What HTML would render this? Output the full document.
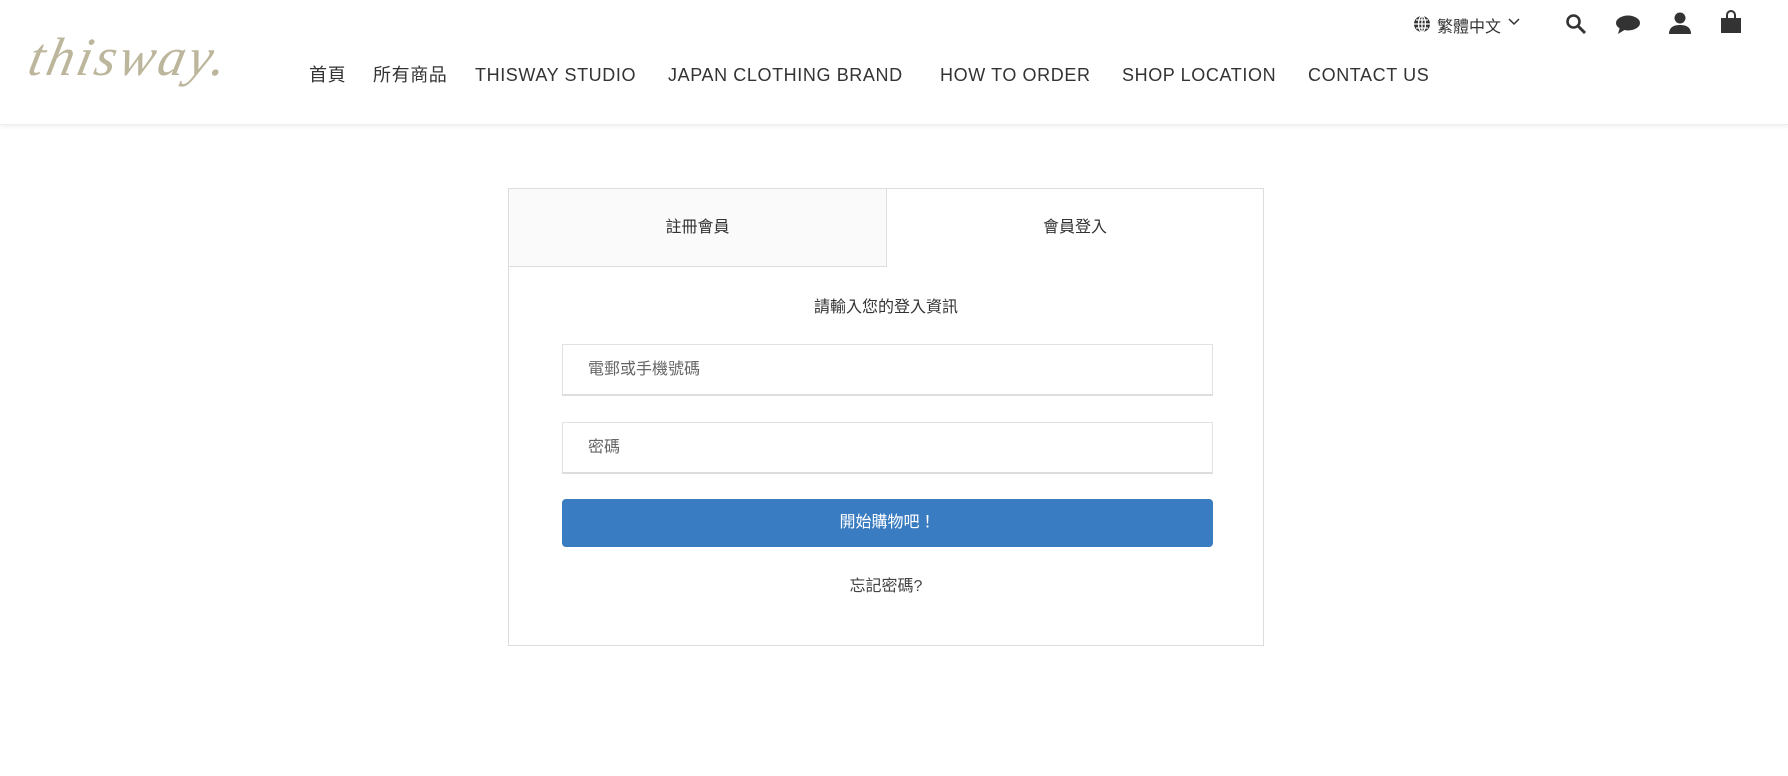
<!DOCTYPE html>
<html><head><meta charset="utf-8"><style>
*{margin:0;padding:0;box-sizing:border-box}
body{width:1788px;height:776px;background:#fff;font-family:"Liberation Sans","Noto Sans CJK TC",sans-serif;color:#333;position:relative;overflow:hidden}
.hdr{position:absolute;left:0;top:0;width:1788px;height:125px;background:#fff;box-shadow:0 2px 4px rgba(0,0,0,.06);border-bottom:1px solid #eee}
.logo{position:absolute;left:30px;top:26px;font-family:"Liberation Serif",serif;font-style:italic;font-size:54px;color:#bcb69c;letter-spacing:3px;transform:skewX(-12deg)}
.nav{position:absolute;top:63px;left:0;font-size:18px;color:#333;letter-spacing:.6px;white-space:nowrap;line-height:24px}
.nav span{position:absolute;top:0}
.top{position:absolute;top:13px;font-size:16px;color:#333}
.box{position:absolute;left:508px;top:188px;width:756px;height:458px;border:1px solid #ddd}
.tab{position:absolute;top:0;height:78px;line-height:78px;text-align:center;font-size:16px;color:#333}
.in{position:absolute;left:53px;width:651px;height:52px;border:1px solid #e2e2e2;border-bottom:2px solid #ddd;padding-left:25px;line-height:50px;font-size:16px;color:#666}
.btn{position:absolute;left:53px;top:310px;width:651px;height:48px;background:#3a7cc1;border-radius:4px;color:#fff;text-align:center;line-height:48px;font-size:16px}
</style></head><body>
<div class="hdr">
<div class="logo">thisway.</div>
<div class="nav">
<span style="left:309px">首頁</span>
<span style="left:373px">所有商品</span>
<span style="left:475px">THISWAY STUDIO</span>
<span style="left:668px">JAPAN CLOTHING BRAND</span>
<span style="left:940px">HOW TO ORDER</span>
<span style="left:1122px">SHOP LOCATION</span>
<span style="left:1308px">CONTACT US</span>
</div>
<svg style="position:absolute;left:1413px;top:15px" width="18" height="18" viewBox="0 0 18 18"><circle cx="9" cy="9" r="8" fill="#333"/><path d="M1 9h16M9 1v16M3 5h12M3 13h12" stroke="#fff" stroke-width="1.3"/><ellipse cx="9" cy="9" rx="3.5" ry="8" fill="none" stroke="#fff" stroke-width="1.3"/></svg>
<div class="top" style="left:1437px">繁體中文</div>
<svg style="position:absolute;left:1508px;top:18px" width="12" height="9" viewBox="0 0 12 9"><path d="M1 1l5 5 5-5" fill="none" stroke="#333" stroke-width="1.5"/></svg>
<svg style="position:absolute;left:1565px;top:13px" width="22" height="22" viewBox="0 0 22 22"><circle cx="8.5" cy="8.5" r="6" fill="none" stroke="#333" stroke-width="2.6"/><path d="M13 13l7 7" stroke="#333" stroke-width="3"/></svg>
<svg style="position:absolute;left:1615px;top:15px" width="26" height="20" viewBox="0 0 26 20"><ellipse cx="13" cy="8" rx="12" ry="7.5" fill="#333"/><path d="M5 12l-2 7 8-5z" fill="#333"/></svg>
<svg style="position:absolute;left:1668px;top:12px" width="24" height="22" viewBox="0 0 24 22"><circle cx="12" cy="6" r="5.5" fill="#333"/><path d="M1 22c0-7 5-9 11-9s11 2 11 9z" fill="#333"/></svg>
<svg style="position:absolute;left:1720px;top:10px" width="22" height="24" viewBox="0 0 22 24"><path d="M7 8V5a4 4 0 0 1 8 0v3" fill="none" stroke="#333" stroke-width="2"/><path d="M1 8h20v15H1z" fill="#333"/></svg>
</div>
<div class="box">
<div class="tab" style="left:0;width:378px;background:#fafafa;border-right:1px solid #ddd;border-bottom:1px solid #ddd">註冊會員</div>
<div class="tab" style="left:378px;width:376px">會員登入</div>
<div style="position:absolute;top:104px;width:100%;text-align:center;font-size:16px">請輸入您的登入資訊</div>
<div class="in" style="top:155px">電郵或手機號碼</div>
<div class="in" style="top:233px">密碼</div>
<div class="btn">開始購物吧！</div>
<div style="position:absolute;top:383px;width:100%;text-align:center;font-size:16px;color:#444">忘記密碼?</div>
</div>
</body></html>
